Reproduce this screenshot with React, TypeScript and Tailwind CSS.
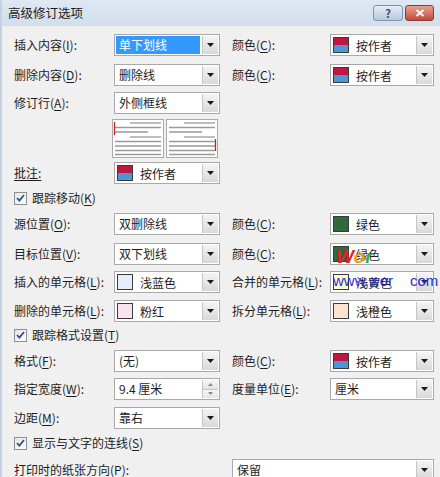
import React from "react";

type Swatch = { top: string; bottom?: string };

const FONT = '"Noto Sans CJK SC", "Noto Sans", sans-serif';

// 下拉框右侧按钮
const ArrowButton = () => (
  <div className="flex h-full w-[16px] items-center justify-center border-l border-[#c5c5c5] bg-gradient-to-b from-[#f4f4f4] to-[#d9d9d9]">
    <svg width="7" height="4" viewBox="0 0 7 4">
      <path d="M0 0h7L3.5 4z" fill="#1a1a1a" />
    </svg>
  </div>
);

const SpinButton = () => (
  <div className="flex h-full w-[16px] flex-col border-l border-[#c5c5c5]">
    <div className="flex flex-1 items-center justify-center border-b border-[#c5c5c5] bg-gradient-to-b from-[#f6f6f6] to-[#e4e4e4]">
      <svg width="5" height="3" viewBox="0 0 5 3">
        <path d="M0 3h5L2.5 0z" fill="#8a8a8a" />
      </svg>
    </div>
    <div className="flex flex-1 items-center justify-center bg-gradient-to-b from-[#f6f6f6] to-[#e4e4e4]">
      <svg width="5" height="3" viewBox="0 0 5 3">
        <path d="M0 0h5L2.5 3z" fill="#8a8a8a" />
      </svg>
    </div>
  </div>
);

const Dropdown: React.FC<{
  text: string;
  swatch?: Swatch;
  selected?: boolean;
  spin?: boolean;
}> = ({ text, swatch, selected, spin }) => (
  <div className="flex h-[22px] w-full items-stretch border border-[#a9a9a9] bg-white p-px">
    <div className="flex flex-1 items-center">
      {swatch && (
        <div className="ml-px mr-[7px] flex h-[16px] w-[16px] flex-col border border-[#3a3a3a]">
          <div className="flex-1" style={{ background: swatch.top }} />
          <div className="flex-1" style={{ background: swatch.bottom ?? swatch.top }} />
        </div>
      )}
      {selected ? (
        <div className="mr-[2px] flex h-full flex-1 items-center bg-[#3399ff] pl-[3px] text-white">
          {text}
        </div>
      ) : (
        <span className={swatch ? "pt-[2px]" : "pl-[3px]"}>{text}</span>
      )}
    </div>
    {spin ? <SpinButton /> : <ArrowButton />}
  </div>
);

// 带下划线的快捷键
const Label: React.FC<{ pre: string; key_: string; post?: string }> = ({
  pre,
  key_,
  post = "):",
}) => (
  <span className="whitespace-nowrap">
    {pre}(<span className="underline underline-offset-2">{key_}</span>
    {post}
  </span>
);

const Check: React.FC<{ children: React.ReactNode }> = ({ children }) => (
  <div className="flex h-[16px] items-center gap-[5px] pl-[12px]">
    <div className="flex h-[13px] w-[13px] items-center justify-center border border-[#8f8f8f] bg-gradient-to-br from-[#e6e6e6] to-white">
      <svg width="9" height="8" viewBox="0 0 9 8">
        <path d="M1 4l2.4 2.6L8 1" stroke="#2a4f9c" strokeWidth="1.8" fill="none" />
      </svg>
    </div>
    <span>{children}</span>
  </div>
);

const Row: React.FC<{
  mt: string;
  label: React.ReactNode;
  control: React.ReactNode;
  rLabel?: React.ReactNode;
  rControl?: React.ReactNode;
}> = ({ mt, label, control, rLabel, rControl }) => (
  <div
    className={`grid h-[22px] grid-cols-[100px_106px_12px_98px_104px] items-center pl-[12px] ${mt}`}
  >
    <div>{label}</div>
    <div>{control}</div>
    <div />
    <div>{rLabel}</div>
    <div>{rControl}</div>
  </div>
);

const AUTHOR: Swatch = { top: "#c0163f", bottom: "#4d95d6" };
const GREEN: Swatch = { top: "#2e6a3b" };

const PreviewBox: React.FC<{ side: "left" | "right" }> = ({ side }) => (
  <div className="h-[39px] w-[52px] border border-[#a9a9a9] bg-white">
    <svg width="50" height="37" viewBox="0 0 50 37">
      <g stroke="#9a9a9a" strokeWidth="1.3">
        <line x1="17" y1="3" x2="48" y2="3" />
        <line x1="2" y1="7.5" x2="48" y2="7.5" />
        <line x1="2" y1="12" x2="35" y2="12" />
        <line x1="17" y1="17" x2="48" y2="17" />
        <line x1="2" y1="21.5" x2="48" y2="21.5" />
        <line x1="2" y1="26" x2="48" y2="26" />
        <line x1="2" y1="30.5" x2="48" y2="30.5" />
        <line x1="2" y1="34.5" x2="48" y2="34.5" />
      </g>
      {side === "left" ? (
        <line x1="1.5" y1="2" x2="1.5" y2="15" stroke="#c8202a" strokeWidth="1.3" />
      ) : (
        <line x1="48.5" y1="19" x2="48.5" y2="31" stroke="#c8202a" strokeWidth="1.3" />
      )}
    </svg>
  </div>
);

export default function App() {
  return (
    <div
      className="relative h-[477px] w-[440px] overflow-hidden border-l-[2px] border-[#c4d3e4] bg-[#f0f0f0] text-[12px] leading-none text-[#1e1e1e]"
      style={{ fontFamily: FONT }}
    >
      {/* 标题栏 */}
      <div className="flex h-[26px] items-center justify-between bg-gradient-to-b from-[#dfe8f3] to-[#d2deec] pl-[6px] pr-[6px]">
        <span className="text-[12.5px] text-[#1a1a1a]">高级修订选项</span>
        <div className="flex gap-[2px] self-start pt-[5px]">
          <div className="flex h-[16px] w-[30px] items-center justify-center rounded-[3px] border border-[#7f93ad] bg-gradient-to-b from-[#e4ecf6] to-[#b7c8de] text-[11px] font-bold text-[#3c4e66]">
            ?
          </div>
          <div className="flex h-[16px] w-[29px] items-center justify-center rounded-[3px] border border-[#8c3a32] bg-gradient-to-b from-[#e8a192] to-[#c2483a]">
            <svg width="10" height="8" viewBox="0 0 10 8">
              <path d="M1.5 1l7 6M8.5 1l-7 6" stroke="white" strokeWidth="2" />
            </svg>
          </div>
        </div>
      </div>

      <Row
        mt="mt-[8px]"
        label={<Label pre="插入内容" key_="I" />}
        control={<Dropdown text="单下划线" selected />}
        rLabel={<Label pre="颜色" key_="C" />}
        rControl={<Dropdown text="按作者" swatch={AUTHOR} />}
      />
      <Row
        mt="mt-[8px]"
        label={<Label pre="删除内容" key_="D" />}
        control={<Dropdown text="删除线" />}
        rLabel={<Label pre="颜色" key_="C" />}
        rControl={<Dropdown text="按作者" swatch={AUTHOR} />}
      />
      <Row
        mt="mt-[6px]"
        label={<Label pre="修订行" key_="A" />}
        control={<Dropdown text="外侧框线" />}
      />
      <div className="mt-[5px] flex gap-[2px] pl-[110px]">
        <PreviewBox side="left" />
        <PreviewBox side="right" />
      </div>
      <Row
        mt="mt-[4px]"
        label={<span className="underline underline-offset-2">批注:</span>}
        control={<Dropdown text="按作者" swatch={AUTHOR} />}
      />
      <div className="mt-[6px]">
        <Check>
          跟踪移动(<span className="underline underline-offset-2">K</span>)
        </Check>
      </div>
      <Row
        mt="mt-[7px]"
        label={<Label pre="源位置" key_="O" />}
        control={<Dropdown text="双删除线" />}
        rLabel={<Label pre="颜色" key_="C" />}
        rControl={<Dropdown text="绿色" swatch={GREEN} />}
      />
      <Row
        mt="mt-[8px]"
        label={<Label pre="目标位置" key_="V" />}
        control={<Dropdown text="双下划线" />}
        rLabel={<Label pre="颜色" key_="C" />}
        rControl={<Dropdown text="绿色" swatch={GREEN} />}
      />
      <Row
        mt="mt-[6px]"
        label={<Label pre="插入的单元格" key_="L" />}
        control={<Dropdown text="浅蓝色" swatch={{ top: "#e2eefa" }} />}
        rLabel={<Label pre="合并的单元格" key_="L" />}
        rControl={<Dropdown text="浅黄色" swatch={{ top: "#fffbd0" }} />}
      />
      <Row
        mt="mt-[7px]"
        label={<Label pre="删除的单元格" key_="L" />}
        control={<Dropdown text="粉红" swatch={{ top: "#fbe3ee" }} />}
        rLabel={<Label pre="拆分单元格" key_="L" />}
        rControl={<Dropdown text="浅橙色" swatch={{ top: "#fde2d1" }} />}
      />
      <div className="mt-[5px]">
        <Check>
          跟踪格式设置(<span className="underline underline-offset-2">T</span>)
        </Check>
      </div>
      <Row
        mt="mt-[7px]"
        label={<Label pre="格式" key_="F" />}
        control={<Dropdown text="(无)" />}
        rLabel={<Label pre="颜色" key_="C" />}
        rControl={<Dropdown text="按作者" swatch={AUTHOR} />}
      />
      <Row
        mt="mt-[6px]"
        label={<Label pre="指定宽度" key_="W" />}
        control={<Dropdown text="9.4 厘米" spin />}
        rLabel={<Label pre="度量单位" key_="E" />}
        rControl={<Dropdown text="厘米" />}
      />
      <Row
        mt="mt-[7px]"
        label={<Label pre="边距" key_="M" />}
        control={<Dropdown text="靠右" />}
      />
      <div className="mt-[6px]">
        <Check>
          显示与文字的连线(<span className="underline underline-offset-2">S</span>)
        </Check>
      </div>
      <div className="mt-[8px] grid h-[22px] grid-cols-[218px_202px] items-center pl-[12px]">
        <Label pre="打印时的纸张方向" key_="P" />
        <Dropdown text="保留" />
      </div>

      {/* 水印 */}
      <div
        className="pointer-events-none absolute left-[334px] top-[247px] text-[19px] font-bold italic leading-none"
        style={{ fontFamily: '"Liberation Sans", sans-serif' }}
      >
        <span className="text-[#e0202a]">W</span>
        <span className="text-[#f29a1a]">o</span>
        <span className="text-[#3fae3c]">r</span>
      </div>
      <div
        className="pointer-events-none absolute left-[331px] top-[273px] text-[15px] leading-none text-[#2a2fd0]"
        style={{ fontFamily: '"Liberation Sans", sans-serif' }}
      >
        www.wor
      </div>
      <div
        className="pointer-events-none absolute left-[408px] top-[273px] text-[15px] leading-none text-[#2a2fd0]"
        style={{ fontFamily: '"Liberation Sans", sans-serif' }}
      >
        com
      </div>
    </div>
  );
}
